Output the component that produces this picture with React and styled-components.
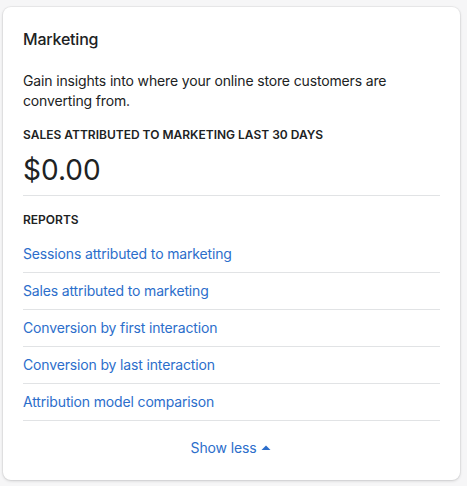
import React, { useState } from "react";
import styled, { createGlobalStyle } from "styled-components";

const GlobalStyle = createGlobalStyle`
  html, body {
    margin: 0;
    padding: 0;
    background: #f6f6f7;
    font-family: Inter, "Noto Sans", "Liberation Sans", sans-serif;
    color: #202223;
    -webkit-font-smoothing: antialiased;
  }
`;

const Page = styled.div`
  padding: 7px 7px 7px 3px;
`;

const Card = styled.section`
  width: 457px;
  box-sizing: border-box;
  background: #fff;
  border-radius: 8px;
  box-shadow: 0 0 0 1px rgba(63, 63, 68, 0.05), 0 1px 3px 0 rgba(63, 63, 68, 0.2);
  padding: 20px 20px 0;
`;

const Title = styled.h2`
  margin: 0;
  font-size: 16px;
  line-height: 24px;
  font-weight: 500;
  letter-spacing: -0.2px;
`;

const Description = styled.p`
  margin: 20px 0 0;
  font-size: 14px;
  line-height: 20px;
  font-weight: 400;
  letter-spacing: -0.15px;
`;

const Label = styled.h3`
  margin: ${(p) => p.$top || 0}px 0 0;
  font-size: 12px;
  line-height: 16px;
  font-weight: 600;
  text-transform: uppercase;
`;

const Amount = styled.div`
  margin-top: 9px;
  font-size: 28px;
  line-height: 36px;
  font-weight: 400;
  padding-bottom: 7px;
  border-bottom: 1px solid #e1e3e5;
`;

const List = styled.ul`
  list-style: none;
  margin: 8px 0 0;
  padding: 0;
`;

const Item = styled.li`
  padding: 8px 0;
  border-bottom: 1px solid #e1e3e5;
  font-size: 14px;
  line-height: 20px;
  letter-spacing: -0.15px;
`;

const Link = styled.a`
  color: #2c6ecb;
  text-decoration: none;
  cursor: pointer;
`;

const Footer = styled.div`
  display: flex;
  justify-content: center;
  padding: 17px 0 22px;
`;

const ToggleButton = styled.button`
  display: inline-flex;
  align-items: center;
  gap: 4px;
  border: none;
  background: none;
  padding: 0;
  font: inherit;
  font-size: 14px;
  line-height: 20px;
  letter-spacing: -0.15px;
  color: #2c6ecb;
  cursor: pointer;
`;

const reports = [
  "Sessions attributed to marketing",
  "Sales attributed to marketing",
  "Conversion by first interaction",
  "Conversion by last interaction",
  "Attribution model comparison",
];

const App = () => {
  const [open, setOpen] = useState(true);

  return (
    <Page>
      <GlobalStyle />
      <Card>
        <Title>Marketing</Title>
        <Description>
          Gain insights into where your online store customers are converting
          from.
        </Description>
        <Label $top={16}>Sales attributed to marketing last 30 days</Label>
        <Amount>$0.00</Amount>
        <Label $top={16}>Reports</Label>
        {open && (
          <List>
            {reports.map((item) => (
              <Item key={item}>
                <Link>{item}</Link>
              </Item>
            ))}
          </List>
        )}
        <Footer>
          <ToggleButton onClick={() => setOpen(!open)}>
            {open ? "Show less" : "Show all"}
            <svg width="12" height="12" viewBox="0 0 12 12">
              <path
                d={open ? "M1.5 8 L6 3.5 L10.5 8 Z" : "M1.5 4 L6 8.5 L10.5 4 Z"}
                fill="currentColor"
              />
            </svg>
          </ToggleButton>
        </Footer>
      </Card>
    </Page>
  );
};

export default App;
